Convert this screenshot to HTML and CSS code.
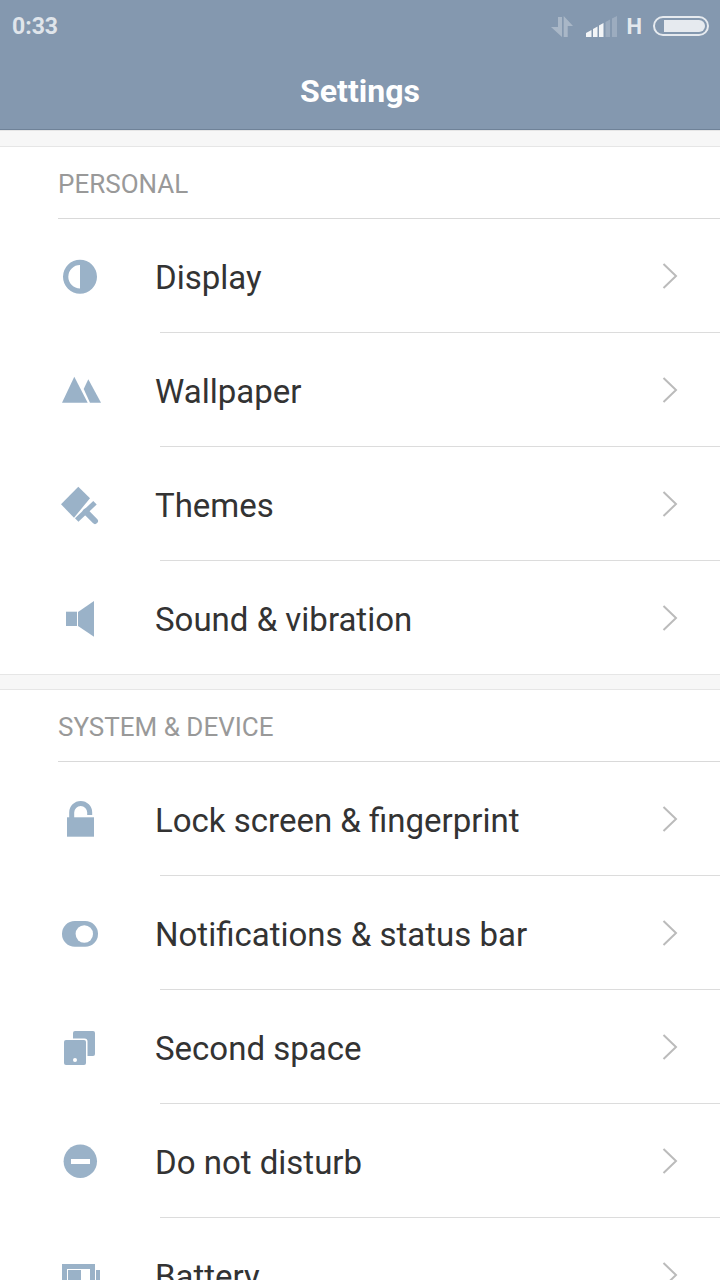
FILE: index.html
```html
<!DOCTYPE html>
<html lang="en">
<head>
    <meta charset="UTF-8">
    <meta name="viewport" content="width=device-width, initial-scale=1.0">
    <title>Settings</title>
    <link rel="stylesheet" href="styles.css">
</head>
<body>
    <!-- Status bar and title -->
    <header class="header">
        <div class="status-bar">
            <span class="time">0:33</span>
            <div class="status-icons">
                <svg class="icon-data" width="22" height="21" viewBox="0 0 22 21">
                    <polygon points="7,1 11,1 11,21 0,11 7,11"/>
                    <polygon points="12.7,0 22,10 16.7,10 16.7,21 12.7,21"/>
                </svg>
                <svg class="icon-signal" width="31" height="21" viewBox="0 0 31 21">
                    <polygon class="on" points="0,17 5.5,14 5.5,21 0,21"/>
                    <polygon class="on" points="7,13 11.5,10.5 11.5,21 7,21"/>
                    <polygon class="on" points="13,9.5 17.5,7 17.5,21 13,21"/>
                    <polygon points="19.5,6 24,3.5 24,21 19.5,21"/>
                    <polygon points="26,2.5 31,0 31,21 26,21"/>
                </svg>
                <span class="network">H</span>
                <div class="battery"><div class="battery-level"></div></div>
            </div>
        </div>
        <h1 class="title">Settings</h1>
    </header>

    <div class="gap gap-first"></div>

    <section class="group">
        <div class="group-label">PERSONAL</div>

        <div class="row">
            <svg class="icon" width="40" height="40" viewBox="0 0 40 40">
                <path fill-rule="evenodd" d="M20 3.7a17 17 0 1 1 0 34 17 17 0 0 1 0-34zM20 9a11.7 11.7 0 0 0 0 23.4z"/>
            </svg>
            <span class="row-text">Display</span>
            <svg class="chevron" width="16" height="28" viewBox="0 0 16 28"><polyline points="1.5,2 14,14 1.5,26"/></svg>
        </div>
        <div class="row">
            <svg class="icon" width="40" height="40" viewBox="0 0 40 40">
                <polygon points="14.3,6.7 2,32.7 27.7,32.7"/>
                <polygon points="28.3,9.3 41,32.7 30,32.7 23.7,19"/>
            </svg>
            <span class="row-text">Wallpaper</span>
            <svg class="chevron" width="16" height="28" viewBox="0 0 16 28"><polyline points="1.5,2 14,14 1.5,26"/></svg>
        </div>
        <div class="row">
            <svg class="icon" width="40" height="40" viewBox="0 0 40 40">
                <polygon points="18.3,2.7 1,20.3 14,33.7 30,14.3"/>
                <path class="line" stroke-width="5" d="M16.7 36 35 18.7"/>
                <path class="line round" stroke-width="6" d="M25.7 27.7 35 37"/>
            </svg>
            <span class="row-text">Themes</span>
            <svg class="chevron" width="16" height="28" viewBox="0 0 16 28"><polyline points="1.5,2 14,14 1.5,26"/></svg>
        </div>
        <div class="row row-last">
            <svg class="icon" width="40" height="40" viewBox="0 0 40 40">
                <rect x="6" y="13.7" width="11" height="14.3"/>
                <polygon points="18,14 34,3 34,38.7 18,28"/>
            </svg>
            <span class="row-text">Sound &amp; vibration</span>
            <svg class="chevron" width="16" height="28" viewBox="0 0 16 28"><polyline points="1.5,2 14,14 1.5,26"/></svg>
        </div>
    </section>

    <div class="gap"></div>

    <section class="group">
        <div class="group-label">SYSTEM &amp; DEVICE</div>

        <div class="row">
            <svg class="icon" width="40" height="40" viewBox="0 0 40 40">
                <rect x="7" y="18.3" width="27" height="19.4"/>
                <path class="line" stroke-width="5" d="M11.7 19v-5.5a9 9 0 0 1 18 0V16"/>
            </svg>
            <span class="row-text">Lock screen &amp; fingerprint</span>
            <svg class="chevron" width="16" height="28" viewBox="0 0 16 28"><polyline points="1.5,2 14,14 1.5,26"/></svg>
        </div>
        <div class="row">
            <svg class="icon" width="40" height="40" viewBox="0 0 40 40">
                <rect x="2" y="8" width="36" height="25.7" rx="12.8"/>
                <circle class="cut" cx="24.3" cy="21" r="8.7"/>
            </svg>
            <span class="row-text">Notifications &amp; status bar</span>
            <svg class="chevron" width="16" height="28" viewBox="0 0 16 28"><polyline points="1.5,2 14,14 1.5,26"/></svg>
        </div>
        <div class="row">
            <svg class="icon" width="40" height="40" viewBox="0 0 40 40">
                <rect x="13" y="4" width="22" height="25" rx="2"/>
                <rect class="cut" x="2.5" y="11.5" width="25" height="28" rx="3"/>
                <rect x="4" y="13" width="22" height="25" rx="2"/>
                <circle class="cut" cx="15" cy="33" r="2"/>
            </svg>
            <span class="row-text">Second space</span>
            <svg class="chevron" width="16" height="28" viewBox="0 0 16 28"><polyline points="1.5,2 14,14 1.5,26"/></svg>
        </div>
        <div class="row">
            <svg class="icon" width="40" height="40" viewBox="0 0 40 40">
                <circle cx="20.3" cy="20.3" r="16.7"/>
                <rect class="cut" x="11" y="18" width="19" height="5"/>
            </svg>
            <span class="row-text">Do not disturb</span>
            <svg class="chevron" width="16" height="28" viewBox="0 0 16 28"><polyline points="1.5,2 14,14 1.5,26"/></svg>
        </div>
        <div class="row">
            <svg class="icon" width="40" height="40" viewBox="0 0 40 40">
                <path fill-rule="evenodd" d="M2 9h33v24H2zM7 14v14h23V14z"/>
                <rect x="8" y="15" width="13" height="12"/>
                <rect x="36" y="15" width="4" height="12"/>
            </svg>
            <span class="row-text">Battery</span>
            <svg class="chevron" width="16" height="28" viewBox="0 0 16 28"><polyline points="1.5,2 14,14 1.5,26"/></svg>
        </div>
    </section>
</body>
</html>
```

FILE: styles.css
```css
html, body {
    height: 1280px;
    overflow: hidden;
}
body {
    margin: 0;
    padding: 0;
    background-color: #fff;
    font-family: Roboto, "Liberation Sans", sans-serif;
    text-rendering: optimizeLegibility;
    font-variant-ligatures: common-ligatures;
}

/* Header */
.header {
    height: 130px;
    box-sizing: border-box;
    background-color: #8498af;
    border-bottom: 1px solid #6f8298;
}
.status-bar {
    height: 52px;
    padding: 0 11px 0 12px;
    display: flex;
    align-items: center;
    justify-content: space-between;
}
.time {
    font-size: 23px;
    font-weight: 700;
    color: rgba(255, 255, 255, 0.75);
}
.status-icons {
    display: flex;
    align-items: center;
}
.icon-data {
    fill: rgba(255, 255, 255, 0.3);
    margin-right: 13px;
}
.icon-signal {
    fill: rgba(255, 255, 255, 0.2);
    margin-right: 9px;
}
.icon-signal .on {
    fill: #fff;
    fill-opacity: 0.9;
}
.network {
    font-size: 22px;
    font-weight: 700;
    color: rgba(255, 255, 255, 0.8);
    margin-right: 11px;
}
.battery {
    width: 56px;
    height: 20px;
    box-sizing: border-box;
    border: 2px solid rgba(255, 255, 255, 0.8);
    border-radius: 10px;
    padding: 2px 2px 2px 9px;
}
.battery-level {
    height: 100%;
    background-color: rgba(255, 255, 255, 0.8);
    border-radius: 0 6px 6px 0;
}
.title {
    margin: 0;
    text-align: center;
    font-size: 32px;
    font-weight: 700;
    line-height: 78px;
    color: #fff;
}

/* Gray band between groups */
.gap {
    height: 14px;
    background-color: #f7f7f7;
    border-top: 1px solid #e6e6e6;
    border-bottom: 1px solid #e6e6e6;
}
.gap-first {
    height: 15px;
}

/* Groups and rows */
.group-label {
    height: 71px;
    margin-left: 58px;
    border-bottom: 1px solid #d9d9d9;
    line-height: 75px;
    font-size: 26px;
    color: #999;
}
.row {
    height: 114px;
    box-sizing: border-box;
    padding: 0 42px 0 60px;
    display: flex;
    align-items: center;
    background: linear-gradient(#dcdcdc, #dcdcdc) 160px 100% / 100% 1px no-repeat;
}
.row-last {
    height: 113px;
    padding-top: 1px;
    background: none;
}
.icon {
    flex: none;
    overflow: visible;
    fill: #9ab2c8;
}
.icon .cut {
    fill: #fff;
}
.icon .line {
    fill: none;
    stroke: #9ab2c8;
}
.icon .round {
    stroke-linecap: round;
}
.row-text {
    flex: 1;
    margin-left: 55px;
    padding-top: 2px;
    font-size: 33px;
    color: #333;
}
.chevron {
    flex: none;
    fill: none;
    stroke: #bbb;
    stroke-width: 2;
}
```
